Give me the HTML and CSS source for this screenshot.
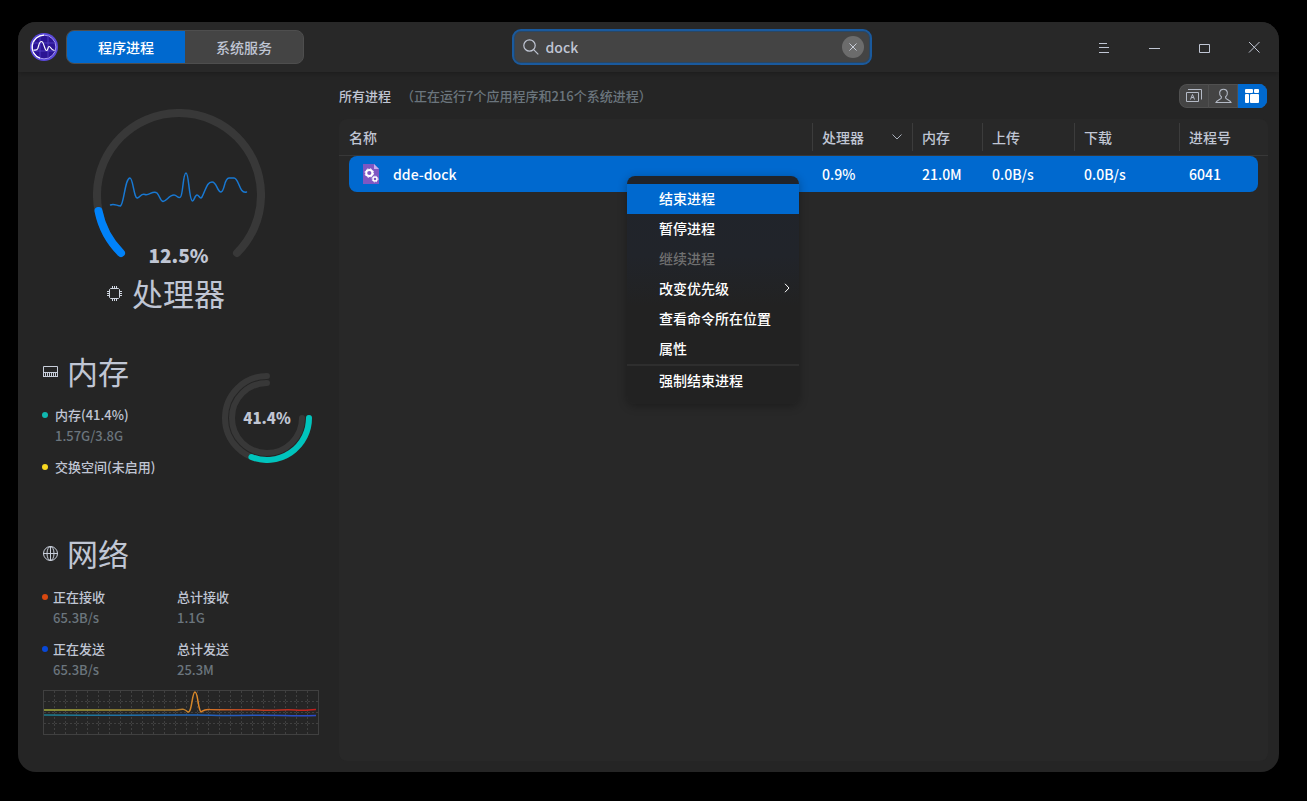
FILE: index.html
```html
<!DOCTYPE html>
<html lang="zh-CN">
<head>
<meta charset="utf-8">
<title>系统监视器</title>
<link rel="stylesheet" href="styles.css">
</head>
<body>
<div class="window">
  <header class="titlebar">
    <svg class="logo" width="28" height="28" viewBox="0 0 28 28" aria-hidden="true">
      <circle cx="14" cy="14" r="14" fill="#5a48dc"/>
      <circle cx="14" cy="14" r="11.9" fill="#2b1494" stroke="#a79af0" stroke-width="1"/>
      <path d="M14 2.100A11.900 11.900 0 0 0 10 25.200" fill="none" stroke="#fff" stroke-width="1.300"/>
      <path d="M10 4v20M18 4v20M3 10h22M3 18h22" stroke="#5741c8" stroke-width=".8"/>
      <path d="M3.500 17C6 17.500 7 17.500 7.800 15.500C9 12 9 8.500 11.500 8.500S14.500 17.500 16.500 17.500S17.500 13.500 19.200 13.500S20.500 17 24.500 17.500" fill="none" stroke="#fff" stroke-width="1.200"/>
    </svg>
    <div class="tabs">
      <button class="tab tab-active" type="button">程序进程</button>
      <button class="tab" type="button">系统服务</button>
    </div>
    <div class="search-area">
      <div class="search">
        <svg width="16" height="16" viewBox="0 0 16 16" fill="none" stroke="#c0c6d4" stroke-width="1.200" aria-hidden="true"><circle cx="6.500" cy="6.500" r="5.700"/><path d="M10.600 10.600L15.300 15.300"/></svg>
        <input class="search-input" type="text" value="dock" aria-label="搜索">
        <button class="clear" type="button" aria-label="清除"><svg width="8" height="8" viewBox="0 0 8 8" stroke="#c8ccd8"><path d="M.5.5l7 7M7.500.5l-7 7"/></svg></button>
      </div>
    </div>
    <div class="controls">
      <button class="control" type="button" aria-label="菜单"><svg width="12" height="12" viewBox="0 0 12 12" stroke="#c0c6d4"><path d="M1 2.500h8M1 6.500h10M1 11.500h10"/></svg></button>
      <button class="control" type="button" aria-label="最小化"><svg width="12" height="12" viewBox="0 0 12 12" stroke="#c0c6d4"><path d="M1 7.500h11"/></svg></button>
      <button class="control" type="button" aria-label="最大化"><svg width="12" height="12" viewBox="0 0 12 12" fill="none" stroke="#c0c6d4"><path d="M1.500 3.500h10v8h-10z"/></svg></button>
      <button class="control" type="button" aria-label="关闭"><svg width="12" height="12" viewBox="0 0 12 12" stroke="#c0c6d4"><path d="M1 1l10.500 10.500M11.500 1L1 11.500"/></svg></button>
    </div>
  </header>

  <div class="content">
    <aside class="sidebar">
      <section class="cpu">
        <div class="gauge">
          <svg class="gauge-art" width="172" height="158" viewBox="0 0 172 158" fill="none" stroke-linecap="round" aria-hidden="true">
            <path d="M28 144A82 82 0 1 1 144 144" stroke="#383838" stroke-width="8"/>
            <path d="M28 144A82 82 0 0 1 5.500 102" stroke="#0082fa" stroke-width="8"/>
            <path d="M17.500 96C21 94 24 97 27.500 97C31 95 32 69 37 69C40 69 41 90 44.500 89C48 88 48 84 52 85.500C56 87 60 81 64 84C67 87 67 92 70 92.500C74 92 76 86 81 86C84 86 85 90 87.500 88C90 86 90 64 93 64C96 64 96 92 99.500 92C101 92 102 86 104 86C106 86 107 91 109 88C113 80 114 73 119 73C124 73 124 83 128 83C132 82 131 69 136 69H141C146 69 146 85 153.500 83" stroke="#1878d2" stroke-width="1.500"/>
          </svg>
          <strong class="gauge-value">12.5%</strong>
        </div>
        <div class="cpu-heading">
          <svg width="15" height="15" viewBox="0 0 15 15" fill="none" stroke="#d0d6e0" aria-hidden="true"><path d="M3.500 2.500h8l1 1v8l-1 1h-8l-1-1v-8zM5.500 0v2M7.500 0v2M9.500 0v2M5.500 13v2M7.500 13v2M9.500 13v2M0 5.500h2M0 7.500h2M0 9.500h2M13 5.500h2M13 7.500h2M13 9.500h2"/></svg>
          <h2 class="heading">处理器</h2>
        </div>
      </section>

      <section class="memory">
        <div>
          <div class="heading-row">
            <svg width="15" height="15" viewBox="0 0 15 15" fill="none" stroke="#c8ceda" aria-hidden="true"><path d="M.5 12.500V2.500h14v10M.5 8.500h14M2.500 9v4M4.500 9v4M6.500 9v4M8.500 9v4M10.500 9v4M12.500 9v4M0 12.500h15"/></svg>
            <h2 class="heading">内存</h2>
          </div>
          <dl class="stats stats-memory">
            <div class="stat teal"><dt>内存(41.4%)</dt><dd>1.57G/3.8G</dd></div>
            <div class="stat yellow"><dt>交换空间(未启用)</dt></div>
          </dl>
        </div>
        <div class="ring">
          <svg class="ring-art" width="90" height="90" viewBox="0 0 90 90" fill="none" stroke-linecap="round" stroke-width="6" aria-hidden="true">
            <path d="M45 3A42 42 0 1 0 87 45M45 10A35 35 0 1 0 80 45" stroke="#383838"/>
            <path d="M87 45A42 42 0 0 1 29.400 84" stroke="#00c4bd"/>
          </svg>
          <strong class="ring-value">41.4%</strong>
        </div>
      </section>

      <section class="network">
        <div class="heading-row">
          <svg width="15" height="15" viewBox="0 0 15 15" fill="none" stroke="#c8ceda" aria-hidden="true"><circle cx="7.500" cy="7.500" r="7"/><ellipse cx="7.500" cy="7.500" rx="3.500" ry="7"/><path d="M7.500 0v15M0 7.500h15"/></svg>
          <h2 class="heading">网络</h2>
        </div>
        <dl class="stats stats-network">
          <div class="stat orange"><dt>正在接收</dt><dd>65.3B/s</dd></div>
          <div class="stat"><dt>总计接收</dt><dd>1.1G</dd></div>
          <div class="stat blue"><dt>正在发送</dt><dd>65.3B/s</dd></div>
          <div class="stat"><dt>总计发送</dt><dd>25.3M</dd></div>
        </dl>
        <svg class="chart" viewBox="0 0 276 45" fill="none" aria-hidden="true">
          <defs>
            <linearGradient id="down" gradientUnits="userSpaceOnUse" x1="0" y1="0" x2="276" y2="0"><stop stop-color="#a4ae3c"/><stop offset=".45" stop-color="#9a7430"/><stop offset=".56" stop-color="#e08a28"/><stop offset=".7" stop-color="#b84a24"/><stop offset="1" stop-color="#c41c1c"/></linearGradient>
            <linearGradient id="up" gradientUnits="userSpaceOnUse" x1="0" y1="0" x2="276" y2="0"><stop stop-color="#1c7c8c"/><stop offset=".5" stop-color="#2068b8"/><stop offset="1" stop-color="#2c48c8"/></linearGradient>
            <pattern id="grid" width="11" height="11" patternUnits="userSpaceOnUse"><path d="M.5 1v2M.5 5v2M.5 9v2M1 .5h2M5 .5h2M9 .5h2" stroke="#404040"/></pattern>
          </defs>
          <rect width="276" height="45" fill="url(#grid)"/>
          <rect x=".5" y=".5" width="275" height="44" stroke="#404040"/>
          <path d="M1 25C90 25.500 140 25 155 25C167 25 174 25.800 190 25.500S225 25 240 25.500S260 26 273 25.500" stroke="url(#up)" stroke-width="1.500"/>
          <path d="M1 20H134C140 19 141 18.500 145 22C149 23 149 2 152 2S155 20 158 22C161 20 161 19 167 19.500C185 20.500 200 19 216 20C235 21 240 19 252 20S265 19.500 273 19.500" stroke="url(#down)" stroke-width="1.500"/>
        </svg>
      </section>
    </aside>

    <main class="main">
      <div class="summary">
        <h1 class="summary-title">所有进程</h1>
        <span class="summary-count">（正在运行7个应用程序和216个系统进程）</span>
        <div class="views">
          <button class="view" type="button" aria-label="应用程序"><svg width="17" height="16" viewBox="0 0 17 16" fill="none" stroke="#b4bac6"><path d="M.5 4.500h12v9H.5zM2 1.500h13.500v10M4.500 11.500l2-5 2 5M5.200 9.500h2.600"/></svg></button>
          <button class="view" type="button" aria-label="我的进程"><svg width="17" height="16" viewBox="0 0 17 16" fill="none" stroke="#b4bac6" stroke-width="1.100"><path d="M6.500 9C3.500 6.500 4 1.200 8.500 1.200S13.500 6.500 10.500 9C10 12 15 11.500 16 14.500H1C2 11.500 7 12 6.500 9z"/></svg></button>
          <button class="view view-active" type="button" aria-label="所有进程"><svg width="14" height="14" viewBox="0 0 14 14" fill="#fff"><rect width="8" height="4" rx="1"/><rect x="9" width="5" height="4" rx="1"/><rect y="5" width="4" height="9" rx="1"/><rect x="5" y="5" width="9" height="9" rx="1"/></svg></button>
        </div>
      </div>
      <div class="panel">
        <table class="table">
          <thead>
            <tr class="row row-head">
              <th>名称</th>
              <th class="sorted">处理器<svg width="10" height="6" viewBox="0 0 10 6" fill="none" stroke="#aab0bc" aria-hidden="true"><path d="M.5.5L5 5L9.500.5"/></svg></th>
              <th>内存</th><th>上传</th><th>下载</th><th>进程号</th>
            </tr>
          </thead>
          <tbody>
            <tr class="row row-selected">
              <td class="name">
                <svg width="16" height="20" viewBox="0 0 16 20" aria-hidden="true"><path d="M0 0H11L16 5V20H0z" fill="#7e57c2"/><path d="M11 0L16 5H11z" fill="#c4aef0"/><g fill="none" stroke="#fff"><circle cx="6.300" cy="9" r="3.100" stroke-width="2"/><circle cx="6.300" cy="9" r="4.300" stroke-width="1" stroke-dasharray="1.700 1.700"/><circle cx="12" cy="15" r="2" stroke-width="1.400"/><circle cx="12" cy="15" r="3" stroke-width=".8" stroke-dasharray="1.200 1.200"/></g></svg>
                dde-dock
              </td>
              <td>0.9%</td><td>21.0M</td><td>0.0B/s</td><td>0.0B/s</td><td>6041</td>
            </tr>
          </tbody>
        </table>
        <div class="menu" role="menu">
          <button class="item item-active" role="menuitem" type="button">结束进程</button>
          <button class="item" role="menuitem" type="button">暂停进程</button>
          <button class="item" role="menuitem" type="button" disabled>继续进程</button>
          <button class="item" role="menuitem" type="button">改变优先级<svg width="6" height="10" viewBox="0 0 6 10" fill="none" stroke="#fff" aria-hidden="true"><path d="M1 .8L5 5L1 9.200"/></svg></button>
          <button class="item" role="menuitem" type="button">查看命令所在位置</button>
          <button class="item" role="menuitem" type="button">属性</button>
          <hr class="divider">
          <button class="item" role="menuitem" type="button">强制结束进程</button>
        </div>
      </div>
    </main>
  </div>
</div>
</body>
</html>
```
FILE: styles.css
```css
* { box-sizing: border-box; }
body {
  margin: 0;
  min-height: 100vh;
  padding: 22px 28px 29px 18px;
  display: flex;
  background: #000;
  color: #c0c6d4;
  font: 500 14px/20px "Noto Sans CJK SC", sans-serif;
}
button, input { font: inherit; color: inherit; margin: 0; padding: 0; border: 0; background: none; }
h1, h2, dl, dd { margin: 0; }
svg { display: block; flex: none; }

.window {
  flex: 1;
  min-width: 0;
  display: flex;
  flex-direction: column;
  background: #252525;
  border-radius: 18px;
  overflow: hidden;
}
.titlebar {
  height: 50px;
  display: flex;
  align-items: center;
  padding-left: 12px;
  background: #282828;
  box-shadow: 0 1px 6px rgba(0, 0, 0, .3);
}
.tabs {
  display: flex;
  width: 238px;
  height: 34px;
  margin-left: 8px;
  border: 1px solid #4e4e4e;
  border-radius: 8px;
  background: #444;
  overflow: hidden;
}
.tab { flex: 1; }
.tab-active { background: #0069cf; color: #fff; }
.search-area { flex: 1; display: flex; justify-content: center; }
.search {
  width: 360px;
  height: 36px;
  display: flex;
  align-items: center;
  gap: 7px;
  padding: 0 6px 0 9px;
  border: 2px solid #1a5a9e;
  border-radius: 9px;
  background: #444;
  box-shadow: inset 0 0 0 1px #2a4764;
}
.search-input { flex: 1; min-width: 0; outline: 0; }
.clear {
  width: 22px;
  height: 22px;
  display: grid;
  place-items: center;
  border-radius: 50%;
  background: #6c6c6c;
}
.controls { display: flex; }
.control { width: 50px; height: 50px; display: grid; place-items: center; }

.content { flex: 1; display: flex; }
.sidebar { width: 321px; flex: none; padding-top: 37px; }
.heading { font-size: 31px; line-height: 44px; font-weight: 400; }
.heading-row { display: flex; align-items: center; gap: 9px; }
.gauge { display: grid; justify-content: center; }
.gauge-art, .gauge-value { grid-area: 1 / 1; }
.gauge-value { align-self: end; justify-self: center; font-size: 19px; line-height: 24px; font-weight: 900; }
.cpu-heading {
  display: grid;
  grid-template-columns: 1fr auto 1fr;
  align-items: center;
  column-gap: 10px;
  margin-top: 4px;
}
.cpu-heading svg { justify-self: end; }
.memory { display: flex; justify-content: space-between; margin-top: 34px; padding: 0 27px 0 25px; }
.ring { display: grid; place-content: center; height: 90px; margin-top: 24px; }
.ring-art, .ring-value { grid-area: 1 / 1; }
.ring-value { align-self: center; justify-self: center; font-size: 15px; font-weight: 900; }

.stats { display: grid; margin-top: 11px; row-gap: 10px; font-size: 13px; line-height: 21px; }
.stats-memory { padding-left: 12px; }
.stats-network { padding-left: 10px; grid-template-columns: 124px 1fr; }
.stat { position: relative; }
.stat dd { color: #6b757d; }
.teal::before, .yellow::before, .orange::before, .blue::before {
  content: "";
  position: absolute;
  top: 8px;
  left: -13px;
  width: 6px;
  height: 6px;
  border-radius: 50%;
}
.teal::before { background: #10b8b0; }
.yellow::before { background: #f8d820; }
.orange::before, .blue::before { left: -11px; }
.orange::before { background: #d84810; }
.blue::before { background: #0848d8; }
.network { margin-top: 54px; padding: 0 20px 0 25px; }
.chart { width: 100%; margin-top: 10px; }

.main { flex: 1; min-width: 0; display: flex; flex-direction: column; padding: 12px 11px 11px 0; }
.summary { display: flex; align-items: center; height: 24px; font-size: 13px; }
.summary-title { font-size: 13px; font-weight: 500; }
.summary-count { margin-left: 10px; color: #6b757d; }
.views {
  display: flex;
  width: 88px;
  height: 24px;
  margin: 0 1px 0 auto;
  border-radius: 8px;
  background: #444;
  overflow: hidden;
}
.view { flex: 1; display: grid; place-items: center; border: 1px solid #505050; border-left-width: 0; }
.view:first-child { border-left-width: 1px; border-radius: 8px 0 0 8px; }
.view-active { background: #0069cf; border-color: #0069cf; }

.panel { position: relative; flex: 1; margin-top: 11px; border-radius: 8px; background: #282828; }
.table, .table thead, .table tbody { display: block; }
.row { display: grid; grid-template-columns: 1fr 100px 70px 92px 105px 89px; align-items: center; }
.row-head { height: 37px; border-bottom: 1px solid #383838; }
.row th { padding: 4px 10px 4px 9px; text-align: left; font-weight: 500; border-left: 1px solid #3c3c3c; }
.row th:first-child { border-left-color: transparent; }
.row .sorted { display: flex; align-items: center; justify-content: space-between; }
.row-selected {
  grid-template-columns: 1fr 100px 70px 92px 105px 79px;
  height: 36px;
  margin: 0 10px;
  border-radius: 8px;
  background: #0069cf;
  color: #fff;
}
.row td { padding: 0 10px; }
.row .name { display: flex; align-items: center; gap: 14px; padding-left: 14px; }

.menu {
  position: absolute;
  top: 57px;
  left: 288px;
  width: 172px;
  padding: 8px 0;
  border-radius: 8px;
  background: linear-gradient(#20242b, #21242a 80px, #222 130px);
  box-shadow: 0 2px 10px rgba(0, 0, 0, .3);
  color: #fff;
  overflow: hidden;
}
.item {
  width: 100%;
  height: 30px;
  display: flex;
  align-items: center;
  justify-content: space-between;
  padding: 0 9px 2px 32px;
}
.item-active { background: #0069cf; }
.item:disabled { color: #707070; }
.divider { height: 2px; margin: 0; border: 0; background: #2e2e2e; }
```
